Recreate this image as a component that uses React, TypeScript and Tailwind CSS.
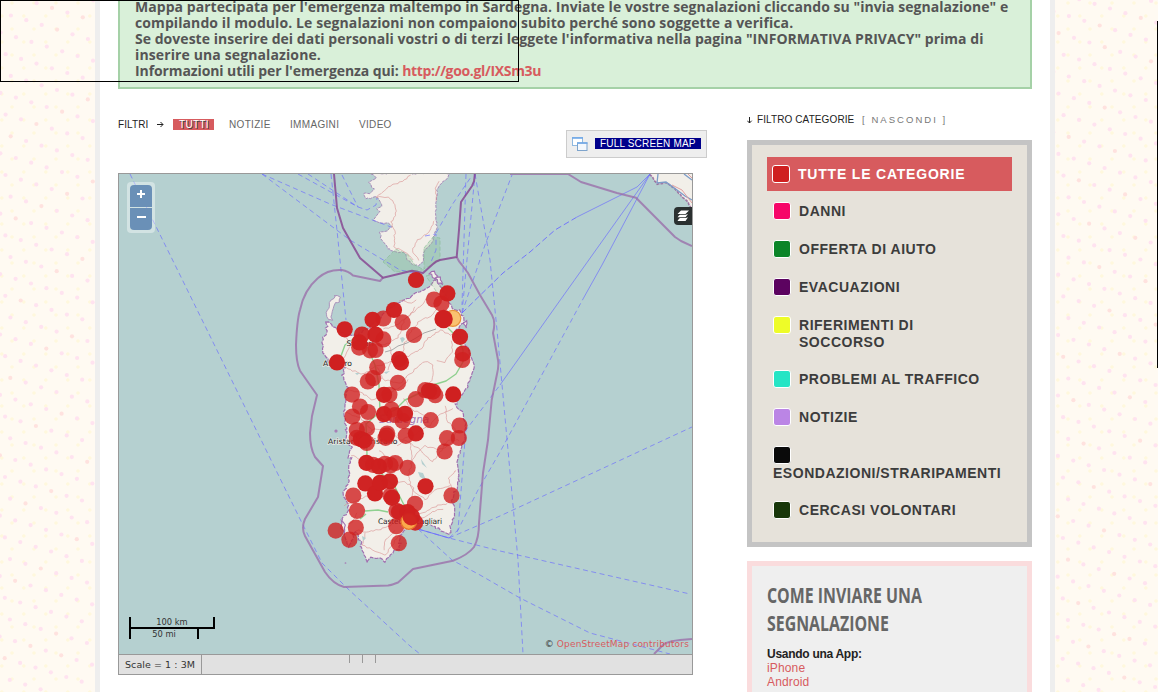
import React from "react";

type Pt = [number, number];

const parse = (s: string): Pt[] => s.trim().split(/\s+/).map((p) => p.split(",").map(Number) as Pt);

// Subdivides an outline and shifts the new points a little, for a ragged coast.
function coast(s: string, amp: number, closed = true): string {
  const pts = parse(s);
  const out: string[] = [];
  let seed = 7;
  const rnd = () => {
    seed = (seed * 16807) % 2147483647;
    return seed / 2147483647 - 0.5;
  };
  for (let i = 0; i < pts.length - (closed ? 0 : 1); i++) {
    const a = pts[i];
    const b = pts[(i + 1) % pts.length];
    const n = Math.max(1, Math.round(Math.hypot(b[0] - a[0], b[1] - a[1]) / 2.6));
    for (let k = 0; k < n; k++) {
      const x = a[0] + ((b[0] - a[0]) * k) / n + rnd() * amp;
      const y = a[1] + ((b[1] - a[1]) * k) / n + rnd() * amp;
      out.push(`${x.toFixed(1)},${y.toFixed(1)}`);
    }
  }
  return out.join(" ");
}

const corsica =
  "372,173 376,178 368,182 372,187 374,190 369,193 363,193 365,198 370,199 376,197 381,202 382,207 377,209 380,212 376,217 373,221 381,223 387,223 392,227 387,230 380,233 380,239 385,242 387,248 393,252 400,253 406,253 408,259 415,265 419,266 423,261 424,255 425,248 432,243 434,235 437,227 435,217 436,203 437,190 442,183 447,177 449,173";
const sardinia =
  "327,321 333,326 345,335 357,335 366,330 375,322 386,312 395,304 405,300 414,295 424,290 430,284 436,281 441,289 447,294 450,302 453,308 462,312 463,320 460,326 455,332 462,340 468,350 474,365 472,376 466,388 460,396 456,405 463,414 466,425 465,438 462,448 457,457 458,470 458,485 451,500 455,511 452,522 450,534 443,533 438,529 430,524 422,520 414,521 407,527 399,535 400,547 393,553 386,562 378,557 370,558 367,563 364,553 360,541 355,532 352,540 349,547 344,536 342,522 346,514 349,505 343,496 344,490 349,482 349,468 352,458 349,457 352,447 345,440 346,428 344,415 345,400 347,388 343,375 345,368 337,361 328,361 324,352 322,341 326,332";
const asinara = "335,295 340,297 339,302 335,303 333,309 331,314 332,320 328,319 326,315 329,306 331,300 334,299";

const land = "#f2efe9";

const ferries = [
  "130,174 179,273 300,519 322,563 347,588 410,646 420,654",
  "262,174 330,204 391,227",
  "262,174 350,240 400,270 420,274",
  "298,174 358,207 367,210 376,205 377,198",
  "308,174 358,207",
  "342,175 358,207",
  "331,174 338,240 346,320",
  "462,313 475,174",
  "462,313 485,245 512,175",
  "466,174 463,273 462,305",
  "436,233 452,205 471,177",
  "425,236 436,234 436,250 431,262",
  "475,174 490,260 497,330 508,450 518,560 523,654",
  "449,538 458,530 465,440 466,430 500,385",
  "449,538 500,516 692,427",
  "418,529 449,538 500,551 540,560 690,594",
  "418,529 452,560 480,575 520,598 590,633 670,654",
  "457,532 478,490 500,452 583,299",
];
const ferrySolid = ["500,385 561,299 650,174", "583,299 602,265 650,174", "577,217 637,187 650,174"];

const roads = [
  "377,197 388,197 394,203 396,213 391,222 395,233 394,247 405,252 415,262",
  "377,197 388,187 402,181 412,174",
  "435,220 428,233 416,241 412,251 420,262",
  "437,200 435,188 440,180",
  "430,292 422,305 405,318 398,338 385,345 362,345",
  "440,305 430,317 420,320 412,330 404,345 402,360",
  "416,306 410,315 396,325 380,330",
  "462,330 450,335 440,330 428,338 420,350 404,358",
  "345,335 350,345 345,356 337,362",
  "337,362 350,370 362,374 377,366 398,360",
  "400,300 411,303 418,299",
  "377,366 383,380 400,383 411,373 425,361 433,365 432,380 420,392",
  "452,340 452,352 444,362 434,360",
  "347,390 360,392 372,400 385,394 400,388 410,378",
  "345,412 360,418 372,430 360,440",
  "372,430 388,428 400,440 416,434 430,425 440,414 455,408",
  "446,405 446,420 456,430 450,445 438,450 425,446 415,455 408,467",
  "460,440 448,440 440,452 432,462 420,450 405,440 395,447",
  "352,455 365,462 378,470 390,484 405,482 414,488 410,500",
  "410,440 412,462 408,475 412,490 425,500 435,490 452,485",
  "457,470 448,478 452,490",
  "345,505 358,500 370,495 385,497 400,505 410,515",
  "412,515 425,512 438,505 450,503",
  "420,520 432,512 445,508",
  "358,512 352,522 345,525",
  "357,530 366,532 378,530 390,525 408,517",
  "366,532 362,545 372,550 386,555 392,545 402,532",
  "396,530 385,540 383,552",
  "380,450 388,460 395,475",
  "404,398 412,410 424,415 430,425",
  "390,345 392,360 386,372",
];

const greenRoads = [
  "341,356 345,345 352,340 360,335 366,344 375,365 379,385 380,412 366,424 367,455 378,470 395,487 404,505 412,516",
  "448,328 458,338 463,350 463,362 456,374 446,381 433,385 422,392 405,400 395,410 380,416",
  "365,511 378,510 388,512",
  "360,519 366,514",
];

// [x, y, layers]
const markers: [number, number, number][] = [
  [416, 280, 3], [434, 299.5, 1], [441.5, 303.5, 1], [447.4, 293.4, 3], [394, 310, 3], [383.3, 318.5, 1], [372.6, 319.8, 3],
  [402.7, 322.4, 1], [344.7, 329.3, 3], [383.3, 339.4, 1], [362, 334.5, 2], [375.5, 334.6, 3],
  [359.2, 347.6, 1], [370, 350.3, 1], [375.5, 350, 1], [359.3, 342.4, 3], [414, 334.9, 1], [460, 336.8, 3], [462.8, 353.6, 2],
  [462.3, 360, 1], [337, 362.4, 4], [399.2, 359.2, 3], [401, 362.6, 3], [377.3, 367.2, 1], [373.2, 378.2, 1], [367.8, 381.4, 1],
  [398, 382.8, 1], [352, 394.6, 1], [389.4, 394.8, 1], [384, 394.8, 3], [415.8, 399.2, 1], [425.2, 390.2, 1], [433, 391.6, 2],
  [435.3, 395.2, 1], [429, 390.8, 3], [453.2, 394.4, 4], [360, 406.6, 1], [368, 412, 1], [352.4, 416.5, 1], [391.5, 409.5, 1],
  [384, 414.2, 3], [395, 415, 1], [402.6, 420.8, 1], [405, 413.8, 3], [430.7, 420.2, 1], [459.5, 425.5, 1],
  [458.8, 438, 1], [447, 438.2, 1], [444.6, 451.5, 1], [356.8, 430, 1], [367, 428.6, 1], [387.2, 433.6, 1], [385.6, 437.8, 1], [386.6, 435.5, 1],
  [405.8, 435.8, 1], [415.8, 433.4, 3], [356.8, 437.8, 1], [360.8, 439, 3], [364, 440.6, 3], [366.8, 443, 1],
  [373, 464.8, 1], [366.4, 462.8, 3], [385, 463.8, 1], [390.6, 465.2, 1], [395.2, 463, 1], [379, 466.4, 3],
  [407.6, 467.8, 1], [365.3, 483.4, 3], [375, 493.4, 4], [380, 482.8, 4], [390, 481.3, 3], [390.5, 495.5, 1], [392, 497.8, 3],
  [425.5, 486.3, 3], [415, 503.8, 1], [451.5, 495.4, 1], [353.3, 495.6, 1], [357, 510.8, 1], [335.7, 530.6, 1],
  [355.8, 527.6, 1], [349.4, 539.7, 1], [396.3, 526.2, 1], [398.8, 543.2, 1], [396.5, 510.8, 1], [399, 512, 2],
  [407.5, 512, 3], [415.2, 522.6, 2],
];

const ALPHA = [0, 0.8, 0.93, 0.98, 1];

function MapCanvas() {
  const boundary = { fill: "none", stroke: "#9a6aa8", strokeWidth: 2, strokeOpacity: 0.75, strokeLinejoin: "round" as const };
  return (
    <svg className="block h-[480px] w-[573px] bg-[#b5d0d0]" viewBox="119 174 573 480">
      <polygon points={coast(corsica, 2.2)} fill={land} stroke="#a88dba" strokeWidth="1" strokeDasharray="3 1" />
      <polygon points={coast(sardinia, 2.6)} fill={land} stroke="#a06fb0" strokeWidth="1.2" strokeDasharray="4 1" />
      <polygon points={coast(asinara, 1.6)} fill={land} stroke="#a58bb8" strokeWidth=".9" />
      <polygon points="650,174 657,184 667,183 674,188 682,197 688,202 692,210 692,174" fill={land} />
      <polyline points={coast("650,174 657,184 667,183 674,188 682,197 688,202 692,210", 1.2, false)} fill="none" stroke="#8c4a8c" strokeOpacity=".7" strokeWidth="1.6" strokeDasharray="3 1" />
      <path d="M658 174L657 183L666 182L677 190L685 196L692 200M684 174L692 180" fill="none" stroke="#7c9cc8" strokeWidth="1.3" />
      <path d="M688 174l4 4M672 185l10 5l10 13" fill="none" stroke="#e0a0a0" strokeWidth="1" />

      <g fill="#86bd93" fillOpacity=".32" stroke="#86bd93" strokeOpacity=".6" strokeDasharray="4 2">
        <polygon points="383,262 396,249 408,255 415,265 424,270 395,272" />
        <polygon points="424,248 433,237 440,238 440,260 424,269" />
        <polygon points="426,276 435,274 447,288 447,296 438,294" fillOpacity=".15" />
      </g>
      <g fill={land} stroke="#a06fb0" strokeWidth="1.1">
        <polygon points={coast("430,273 434,271 437,276 434,279", 1.8)} />
        <polygon points={coast("436,278 440,277 442,284 438,283", 1.8)} />
        <polygon points={coast("464,323 467,321 466,328", 1.5)} />
        <polygon points={coast("342,520 345,525 344,533 341,528", 1.5)} />
        <circle cx="336" cy="431" r="1" /><circle cx="345.5" cy="563" r=".3" />
      </g>

      <g fill="none" stroke="#d98f8f" strokeWidth=".8" strokeOpacity=".75">
        {roads.map((r, i) => <polyline key={i} points={coast(r, 1.8, false)} />)}
      </g>
      <polyline points="385,352 392,350 398,346 407,343 416,338 424,333 430,331 436,329" fill="none" stroke="#aaa" strokeWidth="1" />
      <g fill="none" stroke="#8fd08f" strokeWidth="1.4">
        {greenRoads.map((r, i) => <polyline key={i} points={r} strokeLinejoin="round" />)}
      </g>
      <path fill="#b5d0d0" d="M400 338l3-1 2 2-3 4zM418 472l5 1 3 7-6-3zM421 459l6 9-5-4zM384 372l6-1-4 3zM417 425l3 1-2 3zM355 373l5 0-3 2zM362 536l4 2-3 3z" />

      <g fill="none" stroke="#6b6bff" strokeOpacity=".66" strokeWidth="1">
        {ferries.map((f, i) => <polyline key={i} points={f} strokeDasharray="5 3.5" />)}
        {ferrySolid.map((f, i) => <polyline key={i} points={f} />)}
        <polyline points="462,313 503,273 530,252 555,230 577,217" strokeDasharray="6 3" strokeOpacity=".9" />
        <polyline points="418,529 449,538" strokeOpacity=".9" />
      </g>

      <path {...boundary} d="M456.7 257Q459 262 462 265L468 273L480 295L492 315Q496 322 493 333L498 360Q499 366 497 374L491.7 400L488 440L483 473L479 523Q479 538 474 547Q468 555 453 560.7L413 569Q402 579 398 582.5Q392 585 388 585.5L344 587Q333 584 325 572L305 536Q301 528 305 519L318 497L323 466L315 457Q310 448 310 433L312 416L317 395L300 370.7Q296 362 296 345Q297 320 300 310Q304 290 318 278Q328 269 342 270Q348 271 353 275.5L380 281L383 277.7" />
      <path {...boundary} stroke="#85408f" strokeOpacity=".8" d="M334 174L337 208L343 228L360 258L383 277.7L412 270.7L423 273L433 264Q436 261 440 260L456.7 257L459 230L461 202L472 186Q475 181 474.7 174" />
      <path {...boundary} d="M510 174H568L581 182L617 193L636 197.7L675 237L681 241L692 246M654 654L664 644Q670 641 680 640L692 639" />

      <text x="379" y="423" fontSize="10.5" fontStyle="italic" fill="#a477b5" fontFamily="DejaVu Sans, sans-serif">Sardegna</text>
      <g fontFamily="DejaVu Sans, sans-serif" fontSize="7.6" fill="#222" stroke="#f2efe9" strokeWidth="1.4" strokeOpacity=".8" paintOrder="stroke">
        <text x="346.5" y="345.5">Sassari</text>
        <text x="323" y="365.5" textLength="29">Alghero</text>
        <text x="328" y="444" textLength="69.5">Aristanis/Oristano</text>
        <text x="378" y="524" textLength="64">Casteddu/Cagliari</text>
      </g>

      <circle cx="452.8" cy="318.3" r="8" fill="#fcb95b" fillOpacity=".85" stroke="#e8923a" strokeWidth="1.2" />
      <g fill="#cf2020">
        {markers.map(([x, y, n], i) => <circle key={i} cx={x} cy={y} r="8.1" fillOpacity={ALPHA[n]} />)}
        <circle cx="443.6" cy="319" r="9.2" />
      </g>
      <circle cx="408.8" cy="521.5" r="7.8" fill="#fba94c" stroke="#e8762c" strokeWidth="1.2" />
      <circle cx="411.3" cy="516.6" r="8.8" fill="#cf2020" fillOpacity=".96" />
    </svg>
  );
}

function Dots() {
  const pink: Pt[] = [];
  for (let i = -60; i < 130; i++)
    for (let j = -60; j < 80; j++) {
      const x = 31.3 + 15.4 * i - 10.3 * j;
      const y = 102.3 + 4.7 * i + 17 * j;
      if ((x < 98 || x > 1052) && x > -3 && x < 1162 && y > -3 && y < 696) pink.push([x, y]);
    }
  return (
    <svg className="absolute left-0 top-0 h-[692px] w-[1158px]">
      <defs>
        <pattern id="y" width="22" height="26" patternUnits="userSpaceOnUse">
          <circle cx="12" cy="3" r="1.8" fill="#fff8dd" />
          <circle cx="1.8" cy="16" r="1.8" fill="#fff8dd" />
        </pattern>
      </defs>
      <rect width="1158" height="692" fill="url(#y)" />
      {pink.map(([x, y], i) => <circle key={i} cx={x} cy={y} r="2.1" fill={i % 7 ? "#ffe3f0" : "#ffe2df"} />)}
    </svg>
  );
}

const categories: [string, string][] = [
  ["DANNI", "bg-[#f60669]"],
  ["OFFERTA DI AIUTO", "bg-[#0b8528]"],
  ["EVACUAZIONI", "bg-[#5c0360]"],
  ["RIFERIMENTI DI SOCCORSO", "bg-[#eefc28]"],
  ["PROBLEMI AL TRAFFICO", "bg-[#25e5c5]"],
  ["NOTIZIE", "bg-[#bb85e5]"],
  ["ESONDAZIONI/STRARIPAMENTI", "bg-[#0a0a0a]"],
  ["CERCASI VOLONTARI", "bg-[#18370a]"],
];

const swatch = "h-[18px] w-[18px] shrink-0 rounded-[3px] border border-white";

export default function App() {
  return (
    <div className="relative h-[692px] w-[1158px] overflow-hidden bg-[#fffaf2] font-['Liberation_Sans',sans-serif] text-[#333]">
      <Dots />
      <div className="relative mx-auto ml-[95px] h-full w-[960px] border-x-[5px] border-[#eee] bg-white px-[18px]">
        <div className="flex h-[89px] w-[914px] flex-col justify-end whitespace-nowrap border-x-2 border-b-2 border-[#a5d1a7] bg-[#d9f0d9] pb-2 pl-[15px] font-['Open_Sans',sans-serif] text-[14px] font-bold leading-4 text-[#555]">
          <p className="tracking-[0.045px]">Mappa partecipata per l'emergenza maltempo in Sardegna. Inviate le vostre segnalazioni cliccando su "invia segnalazione" e</p>
          <p className="tracking-[0.09px]">compilando il modulo. Le segnalazioni non compaiono subito perché sono soggette a verifica.</p>
          <p className="tracking-[0.035px]">Se doveste inserire dei dati personali vostri o di terzi leggete l'informativa nella pagina "INFORMATIVA PRIVACY" prima di</p>
          <p className="tracking-[0.12px]">inserire una segnalazione.</p>
          <p className="tracking-[-0.1px]">Informazioni utili per l'emergenza qui: <span className="tracking-[-0.33px] text-[#d75b5e]">http://goo.gl/IXSm3u</span></p>
        </div>

        <div className="flex w-[914px] justify-between">
          <main className="w-[589px]">
            <div className="flex h-[84px] items-start pt-[30px] text-[10px] leading-[11px] tracking-[0.32px] text-[#666]">
              <span className="w-[38px] tracking-[0.1px] text-[#222]">FILTRI</span>
              <svg className="mr-[9px] mt-[2px] h-[8px] w-[8px]" viewBox="0 0 8 8" fill="none" stroke="#222"><path d="M1 3.5H7M4.500 1L7 3.500L4.500 6" /></svg>
              <span className="h-[11px] w-[41px] bg-[#d75b5e] pl-[6px] text-white [text-shadow:1px_1px_0_#444]">TUTTI</span>
              <span className="ml-[15px] w-[61px]">NOTIZIE</span>
              <span className="w-[69px]">IMMAGINI</span>
              <span>VIDEO</span>
              <div className="ml-auto mt-[11px] flex h-[28px] w-[141px] items-center border border-[#ccc] bg-[#eee] pl-[5px]">
                <svg className="mr-[7px] h-4 w-4" viewBox="0 0 16 16"><rect x=".5" y="1.5" width="10" height="8" fill="#fff" stroke="#8fb8e0" /><path d="M0 2H11" stroke="#72a9e8" strokeWidth="1.6" /><rect x="5.5" y="7" width="9.5" height="7.5" fill="#f4f8fd" stroke="#7ea4cc" /><path d="M5 7H15.5" stroke="#72a9e8" strokeWidth="1.6" /></svg>
                <span className="mb-px h-[11px] w-[106px] whitespace-nowrap bg-[#00008b] pl-[5px] tracking-[0.18px] text-white">FULL SCREEN MAP</span>
              </div>
            </div>

            <div className="relative h-[502px] w-[575px] overflow-hidden border border-[#999]">
              <MapCanvas />
              <div className="absolute left-[8px] top-[8px] w-[28px] rounded-[4px] bg-white/40 p-[3px]">
                <div className="mb-px flex h-[22px] justify-center rounded-t-[4px] bg-[#6a90b7] pt-[5px]"><svg className="h-[8px] w-[8px]" viewBox="0 0 8 8" stroke="#fff" strokeWidth="2"><path d="M0 4H8M4 0V8" /></svg></div>
                <div className="flex h-[22px] justify-center rounded-b-[4px] bg-[#6a90b7] pt-[5px]"><svg className="h-[8px] w-[9px]" viewBox="0 0 9 8" stroke="#fff" strokeWidth="2"><path d="M0 4H9" /></svg></div>
              </div>
              <div className="absolute right-0 top-[33px] flex h-[18px] w-[18px] items-center justify-center rounded-l-[4px] bg-[#2a3030]">
                <svg className="h-3 w-3" viewBox="0 0 12 12" fill="#fff"><path d="M4 .5H12L8.500 4H.5ZM3 4.800H8.800L11 4L8.500 7.200H.5L2 5.500ZM3 8H8.800L11 7.200L8.500 11H.5L2 8.800Z" /></svg>
              </div>
              <div className="absolute left-[10px] top-[443px] w-[86px] text-center font-['DejaVu_Sans',sans-serif] text-[8.3px] text-[#333]">
                <div className="h-[12px] border-2 border-t-0 border-black leading-[10px]">100 km</div>
                <div className="h-[10px] w-[70px] border-x-2 border-black leading-[10px]">50 mi</div>
              </div>
              <div className="absolute right-[3px] top-[465px] whitespace-nowrap font-['DejaVu_Sans',sans-serif] text-[9px] leading-[10px] tracking-[0.16px] text-[#333]">© <span className="text-[#d75b5e]">OpenStreetMap contributors</span></div>
              <div className="flex h-[20px] border-t border-[#999] bg-[#e1e1e1]">
                <div className="w-[83px] whitespace-nowrap border-r border-[#999] pl-[6px] font-['DejaVu_Sans',sans-serif] text-[9.5px] leading-[19px] tracking-[0.07px]">Scale = 1 : 3M</div>
                <div className="ml-[147px] h-[8px] w-[14px] border-x border-[#999]" />
                <div className="h-[8px] w-[13px] border-r border-[#999]" />
              </div>
            </div>
          </main>

          <aside className="w-[285px]">
            <div className="flex h-[51px] items-start pt-[25px] text-[10px] leading-[11px]">
              <svg className="mr-[4px] mt-[2px] h-[8px] w-[6px]" viewBox="0 0 6 8" fill="none" stroke="#222"><path d="M2.500 1V7M.3 4.700L2.500 7L4.700 4.700" /></svg>
              <span className="w-[105px] whitespace-nowrap tracking-[0.1px] text-[#222]">FILTRO CATEGORIE</span>
              <span className="text-[9.5px] tracking-[2.05px] text-[#777]">[ NASCONDI ]</span>
            </div>
            <div className="h-[407px] border-[5px] border-[#c4c4c4] bg-[#e6e2da] px-[15px] pt-[12px] text-[14px] font-bold leading-[17px] tracking-[0.52px]">
              <div className="flex h-[34px] items-center bg-[#d75b5e] pl-[5px] tracking-[0.8px] text-white">
                <span className={`${swatch} mr-[8px] bg-[#cf2020]`} />TUTTE LE CATEGORIE
              </div>
              <div className="flex flex-col gap-[20px] pl-[6px] pt-[11px]">
                {categories.map(([name, color]) => {
                  const stacked = name.startsWith("ESONDAZIONI");
                  return (
                    <div key={name} className={stacked ? "mb-[-1px] flex h-[36px] flex-col" : name.startsWith("RIFERIMENTI") ? "mb-[-1px] flex h-[35px]" : "flex h-[18px]"}>
                      <span className={`${swatch} ${color} mr-2`} />
                      <span className={stacked ? "mt-px text-[#3c3c3c]" : "max-w-[190px] pt-px text-[#3c3c3c]"}>{name}</span>
                    </div>
                  );
                })}
              </div>
            </div>
            <div className="mt-[14px] h-[200px] border-[5px] border-[#fadcdd] bg-[#efefef] px-[15px] pt-[15px]">
              <h2 className="origin-left scale-x-[0.775] whitespace-nowrap font-['Open_Sans',sans-serif] text-[20.5px] font-bold leading-[28px] text-[#666]">COME INVIARE UNA<br />SEGNALAZIONE</h2>
              <div className="mt-[10px] text-[12px] leading-[14px]">
                <p className="font-bold tracking-[-0.28px] text-[#222]">Usando una App:</p>
                <p className="tracking-[0.15px] text-[#d75b5e]">iPhone</p>
                <p className="tracking-[0.15px] text-[#d75b5e]">Android</p>
              </div>
            </div>
          </aside>
        </div>
      </div>
      <div className="pointer-events-none absolute left-0 top-0 h-[82px] w-[519px] border border-black" />
      <div className="pointer-events-none absolute right-0 top-[21px] h-[347px] w-px bg-black" />
    </div>
  );
}
